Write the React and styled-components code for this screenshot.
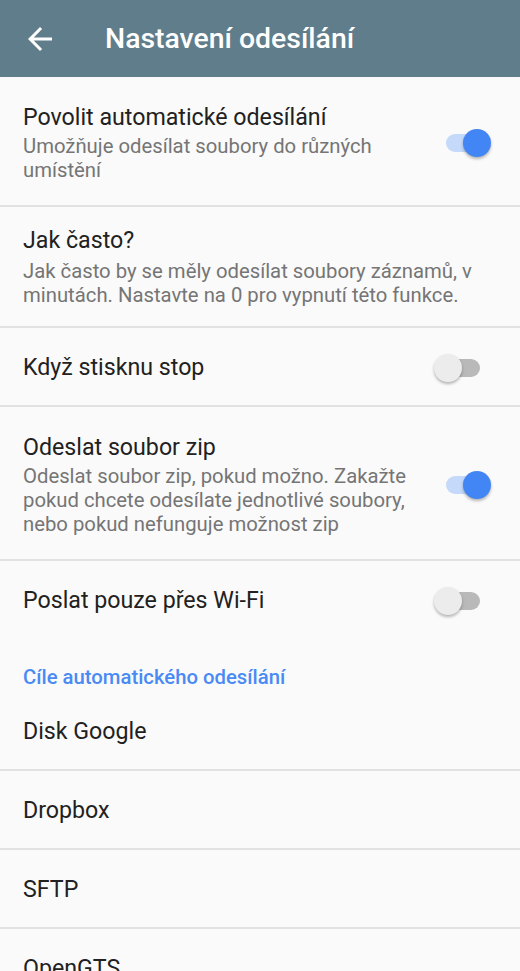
import React from "react";
import styled, { createGlobalStyle } from "styled-components";

const GlobalStyle = createGlobalStyle`
  html, body {
    margin: 0;
    padding: 0;
    background: #fafafa;
    font-family: Roboto, "Noto Sans", sans-serif;
    -webkit-font-smoothing: antialiased;
  }
`;

const settings = [
  {
    title: "Povolit automatické odesílání",
    summary: "Umožňuje odesílat soubory do různých umístění",
    toggle: true,
    on: true,
  },
  {
    title: "Jak často?",
    summary:
      "Jak často by se měly odesílat soubory záznamů, v minutách. Nastavte na 0 pro vypnutí této funkce.",
    compact: true,
  },
  { title: "Když stisknu stop", toggle: true, on: false },
  {
    title: "Odeslat soubor zip",
    summary:
      "Odeslat soubor zip, pokud možno. Zakažte pokud chcete odesílate jednotlivé soubory, nebo pokud nefunguje možnost zip",
    toggle: true,
    on: true,
  },
  { title: "Poslat pouze přes Wi-Fi", toggle: true, on: false, last: true },
];

const targets = ["Disk Google", "Dropbox", "SFTP", "OpenGTS"];

function BackIcon() {
  return (
    <svg width="36" height="36" viewBox="0 0 24 24" fill="#fff">
      <path d="M20 11H7.83l5.59-5.59L12 4l-8 8 8 8 1.41-1.41L7.83 13H20v-2z" />
    </svg>
  );
}

function Switch({ on }) {
  return (
    <SwitchBox>
      <Track $on={on} />
      <Thumb $on={on} />
    </SwitchBox>
  );
}

export default function App() {
  return (
    <>
      <GlobalStyle />
      <Screen>
        <Toolbar>
          <BackButton>
            <BackIcon />
          </BackButton>
          <ToolbarTitle>Nastavení odesílání</ToolbarTitle>
        </Toolbar>

        {settings.map((s) => (
          <Row
            key={s.title}
            $single={!s.summary}
            $compact={s.compact}
            $last={s.last}
          >
            <TextCol>
              <Title>{s.title}</Title>
              {s.summary && <Summary $compact={s.compact}>{s.summary}</Summary>}
            </TextCol>
            {s.toggle && <Switch on={s.on} />}
          </Row>
        ))}

        <Category>Cíle automatického odesílání</Category>

        {targets.map((t) => (
          <Row key={t} $single>
            <TextCol>
              <Title>{t}</Title>
            </TextCol>
          </Row>
        ))}
      </Screen>
    </>
  );
}

const Screen = styled.div`
  width: 520px;
  height: 971px;
  overflow: hidden;
  background: #fafafa;
`;

const Toolbar = styled.div`
  height: 77px;
  background: #607d8b;
  display: flex;
  align-items: center;
`;

const BackButton = styled.div`
  width: 36px;
  height: 36px;
  margin-left: 22px;
  margin-right: 47px;
  display: flex;
`;

const ToolbarTitle = styled.div`
  color: #fff;
  font-size: 28.4px;
  font-weight: 500;
`;

const Row = styled.div`
  display: flex;
  align-items: center;
  box-sizing: border-box;
  padding: ${(p) =>
    p.$single
      ? "2px 29px 0 23px"
      : p.$compact
      ? "20px 23px 19px"
      : "27px 29px 23px 23px"};
  min-height: ${(p) => (p.$single ? (p.$last ? "77px" : "79px") : "auto")};
  border-bottom: ${(p) => (p.$last ? "none" : "2px solid #e2e2e2")};
`;

const TextCol = styled.div`
  flex: 1;
  min-width: 0;
  display: flex;
  flex-direction: column;
`;

const Title = styled.div`
  font-size: 23.2px;
  line-height: 27px;
  color: #212121;
`;

const Summary = styled.div`
  margin-top: ${(p) => (p.$compact ? "5px" : "3px")};
  font-size: 20.3px;
  line-height: 24px;
  color: #757575;
`;

const SwitchBox = styled.div`
  position: relative;
  flex: none;
  width: 57px;
  height: 30px;
`;

const Track = styled.div`
  position: absolute;
  left: 12px;
  right: 11px;
  top: 6px;
  height: 18px;
  border-radius: 9px;
  background: ${(p) => (p.$on ? "#c5d9fb" : "#b9b9b9")};
`;

const Thumb = styled.div`
  position: absolute;
  top: 1px;
  left: ${(p) => (p.$on ? "29px" : "0")};
  width: 28px;
  height: 28px;
  border-radius: 50%;
  background: ${(p) => (p.$on ? "#4285f4" : "#ececec")};
  box-shadow: 0 2px 3px rgba(0, 0, 0, 0.28);
`;

const Category = styled.div`
  padding: 27px 23px 3px;
  font-size: 20.3px;
  line-height: 24px;
  font-weight: 500;
  color: #4a8af4;
`;
